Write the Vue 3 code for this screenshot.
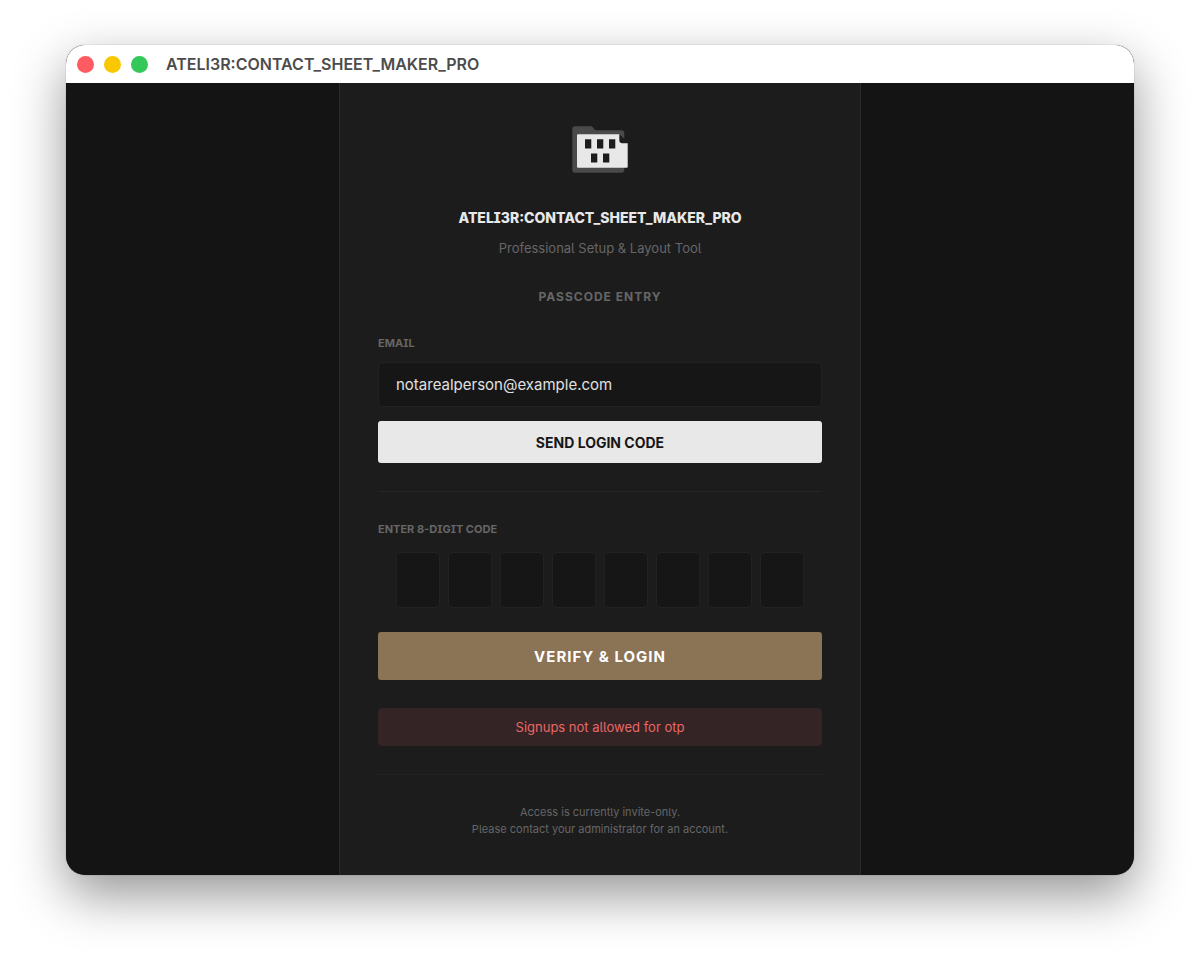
<script setup>
import { ref } from 'vue'

const email = ref('notarealperson@example.com')
const digits = ref(Array(8).fill(''))
</script>

<template>
  <div class="desktop">
    <div class="window">
      <header class="titlebar">
        <button class="light close" type="button" aria-label="Close"></button>
        <button class="light minimize" type="button" aria-label="Minimize"></button>
        <button class="light maximize" type="button" aria-label="Zoom"></button>
        <span class="window-title">ATELI3R:CONTACT_SHEET_MAKER_PRO</span>
      </header>
      <main class="stage">
        <section class="panel">
          <svg class="logo" viewBox="0 0 56 48" aria-hidden="true">
            <path fill="#4a4a4a" d="M3 .3H18.5Q20 .3 21 1.6L23.5 4.3H49.5Q52.3 4.3 52.3 7.3V44Q52.3 46.8 49.5 46.8H3Q.3 46.8 .3 44V3Q.3.3 3 .3Z" />
            <path fill="#1c1c1c" d="M47.3 8.3L56 16V18H47Z" />
            <path fill="#e8e8e8" d="M6 8.3H47.3V14.3Q47.3 17.3 50.3 17.3H55.7V40.7Q55.7 41.7 54.7 41.7H6Q5 41.7 5 40.7V9.3Q5 8.3 6 8.3Z" />
            <path fill="#1c1c1c" d="M13 13.3h6.3v9.2H13zM25 13.3h6.3v9.2H25zM37 13.3h6.3v9.2H37zM19 27.4h6.3v9.2H19zM31 27.4h6.3v9.2H31z" />
          </svg>
          <h1>ATELI3R:CONTACT_SHEET_MAKER_PRO</h1>
          <p class="tagline">Professional Setup &amp; Layout Tool</p>
          <h2>PASSCODE ENTRY</h2>

          <form class="email-form" @submit.prevent>
            <label for="email">EMAIL</label>
            <input id="email" v-model="email" class="email" type="email" />
            <button class="send" type="submit">SEND LOGIN CODE</button>
          </form>

          <form class="code-form" @submit.prevent>
            <label for="digit-0">ENTER 8-DIGIT CODE</label>
            <div class="digits">
              <input
                v-for="(d, i) in digits"
                :id="`digit-${i}`"
                :key="i"
                v-model="digits[i]"
                type="text"
                inputmode="numeric"
                maxlength="1"
                :aria-label="`Digit ${i + 1}`"
              />
            </div>
            <button class="verify" type="submit">VERIFY &amp; LOGIN</button>
          </form>

          <p class="error" role="alert">Signups not allowed for otp</p>
          <footer>
            Access is currently invite-only.<br />
            Please contact your administrator for an account.
          </footer>
        </section>
      </main>
    </div>
  </div>
</template>

<style>
body {
  background: #fff;
}
</style>

<style scoped>
* {
  box-sizing: border-box;
}
.desktop {
  display: flex;
  min-height: 100vh;
  padding: 45px 66px 88px;
  font-family: Inter, "Liberation Sans", sans-serif;
}
.window {
  flex: 1;
  display: flex;
  flex-direction: column;
  overflow: hidden;
  border-radius: 19px;
  background: #141414;
  box-shadow: 0 0 1px rgba(0, 0, 0, 0.5), 0 20px 52px rgba(0, 0, 0, 0.42);
}
.titlebar {
  display: flex;
  align-items: center;
  height: 38px;
  padding: 0 11px;
  gap: 10px;
  background: #fff;
}
.light {
  width: 17px;
  height: 17px;
  padding: 0;
  border: 0;
  border-radius: 50%;
}
.close {
  background: #ff5b60;
}
.minimize {
  background: #fac800;
}
.maximize {
  background: #34c759;
}
.window-title {
  margin-left: 8px;
  font-size: 16px;
  font-weight: 600;
  color: #4c4c4c;
}
.stage {
  flex: 1;
  display: flex;
  justify-content: center;
}
.panel {
  width: 100%;
  max-width: 522px;
  padding: 43px 38px 36px;
  border: solid #2a2a2a;
  border-width: 0 1px;
  background: #1c1c1c;
  color: #666;
  text-align: center;
  font-feature-settings: "cv08", "cv05";
}
.logo {
  display: block;
  width: 56px;
  height: 48px;
  margin: 0 auto 34px;
}
h1 {
  margin: 0;
  font-size: 14px;
  line-height: 20px;
  font-weight: 800;
  color: #e8e8e8;
}
.tagline {
  margin: 10px 0 0;
  font-size: 13px;
  line-height: 20px;
}
h2 {
  margin: 31px 0 0;
  font-size: 12px;
  line-height: 16px;
  font-weight: 700;
  letter-spacing: 1px;
}
.email-form {
  display: flex;
  flex-direction: column;
  margin-top: 30px;
  padding-bottom: 28px;
  border-bottom: 1px solid #242424;
}
label {
  font-size: 11px;
  line-height: 16px;
  font-weight: 700;
  text-align: left;
}
input {
  border: 1px solid #222;
  border-radius: 4px;
  background: #161616;
  color: #e0e0e0;
  font-family: inherit;
}
.email {
  width: 100%;
  height: 45px;
  margin: 11px 0 14px;
  padding: 0 17px;
  font-size: 15px;
}
.send,
.verify {
  width: 100%;
  border: 0;
  border-radius: 3px;
  font-family: inherit;
  font-weight: 700;
}
.send {
  height: 42px;
  background: #e8e8e8;
  color: #161616;
  font-size: 14px;
}
.code-form {
  display: flex;
  flex-direction: column;
  padding-top: 29px;
}
.digits {
  display: flex;
  justify-content: center;
  gap: 8px;
  margin: 15px 0 24px;
}
.digits input {
  width: 44px;
  height: 56px;
  padding: 0;
  text-align: center;
  font-size: 20px;
}
.verify {
  height: 48px;
  background: #8b7355;
  color: #fff;
  font-size: 15px;
  letter-spacing: 1px;
}
.error {
  margin: 28px 0;
  border-radius: 4px;
  background: #352425;
  color: #e86868;
  font-size: 13px;
  line-height: 38px;
}
footer {
  padding-top: 29px;
  border-top: 1px solid #222;
  font-size: 11px;
  line-height: 17px;
}
</style>
